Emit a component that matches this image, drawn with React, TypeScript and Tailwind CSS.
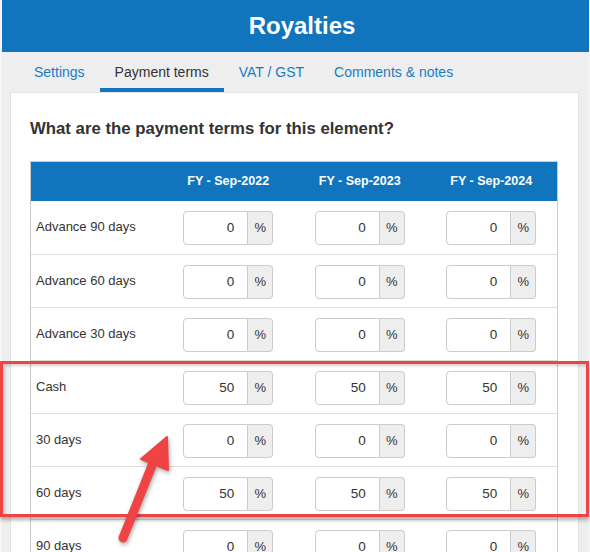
import React from "react";

const years = ["FY - Sep-2022", "FY - Sep-2023", "FY - Sep-2024"];
const rows: { label: string; v: string[] }[] = [
  { label: "Advance 90 days", v: ["0", "0", "0"] },
  { label: "Advance 60 days", v: ["0", "0", "0"] },
  { label: "Advance 30 days", v: ["0", "0", "0"] },
  { label: "Cash", v: ["50", "50", "50"] },
  { label: "30 days", v: ["0", "0", "0"] },
  { label: "60 days", v: ["50", "50", "50"] },
  { label: "90 days", v: ["0", "0", "0"] },
];

function PctInput({ value }: { value: string }) {
  return (
    <div className="flex w-[90px] h-[34px]">
      <div className="w-[65px] h-full border border-[#cccccc] rounded-l-[4px] bg-white flex items-center justify-end pr-[13px] text-[13.5px] text-[#333]">
        {value}
      </div>
      <div className="w-[25px] h-full border border-l-0 border-[#cccccc] rounded-r-[4px] bg-[#eeeeee] flex items-center justify-center text-[13px] text-[#333]">
        %
      </div>
    </div>
  );
}

export default function App() {
  return (
    <div
      className="relative w-[590px] h-[552px] overflow-hidden bg-[#f6f6f6] pl-[2px] pr-[1px]"
      style={{ fontFamily: '"Liberation Sans", Arial, sans-serif' }}
    >
      <div className="h-[52px] bg-[#1075bd] flex items-center justify-center pl-[13px] text-white font-bold text-[24px]">
        Royalties
      </div>
      <div className="bg-[#eeeeee] h-full">
        <div className="flex h-[40px] pl-[17px] text-[14px]">
          <div className="px-[15px] pt-[10px] text-[#1a7bc4]">Settings</div>
          <div className="px-[15px] pt-[10px] text-[#333] border-b-[4px] border-[#1075bd]">Payment terms</div>
          <div className="px-[15px] pt-[10px] text-[#1a7bc4]">VAT / GST</div>
          <div className="px-[15px] pt-[10px] text-[#1a7bc4]">Comments &amp; notes</div>
        </div>
        <div className="ml-[8px] w-[569px] bg-white border border-b-0 border-[#e2e2e2] pl-[19px] pt-[26px] h-full">
          <div className="text-[16.75px] leading-[19px] font-bold text-[#333]">
            What are the payment terms for this element?
          </div>
          <div className="mt-[23px] w-[528px] border border-[#cccccc]">
            <div className="grid grid-cols-4 h-[39px] bg-[#1075bd] text-white font-bold text-[12.5px] items-center">
              <div />
              {years.map((y) => (
                <div key={y} className="text-center">
                  {y}
                </div>
              ))}
            </div>
            {rows.map((r, i) => (
              <div
                key={r.label}
                className={`grid grid-cols-4 h-[53px] pt-[10px] ${i === 0 ? "" : "border-t border-[#dddddd]"}`}
              >
                <div className="h-[34px] flex items-center pl-[5px] pb-[3px] text-[13px] text-[#333]">
                  {r.label}
                </div>
                {r.v.map((v, j) => (
                  <div key={j} className="flex justify-center">
                    <PctInput value={v} />
                  </div>
                ))}
              </div>
            ))}
          </div>
        </div>
      </div>

      {/* highlight box */}
      <div className="absolute left-0 top-[361px] w-[589px] h-[156px] border-[3px] border-[#f04444] shadow-[0_3px_4px_rgba(0,0,0,0.3),inset_2px_2px_3px_rgba(0,0,0,0.18)]" />

      {/* arrow */}
      <svg
        className="absolute left-0 top-0"
        width="590"
        height="552"
        viewBox="0 0 590 552"
        style={{ filter: "drop-shadow(1px 2px 2px rgba(0,0,0,0.35))" }}
      >
        <line x1="123" y1="538" x2="153" y2="463" stroke="#f04444" strokeWidth="9" strokeLinecap="round" />
        <polygon
          points="167,437 141,459 168,470"
          fill="#f04444"
          stroke="#f04444"
          strokeWidth="2"
          strokeLinejoin="round"
        />
      </svg>
    </div>
  );
}
